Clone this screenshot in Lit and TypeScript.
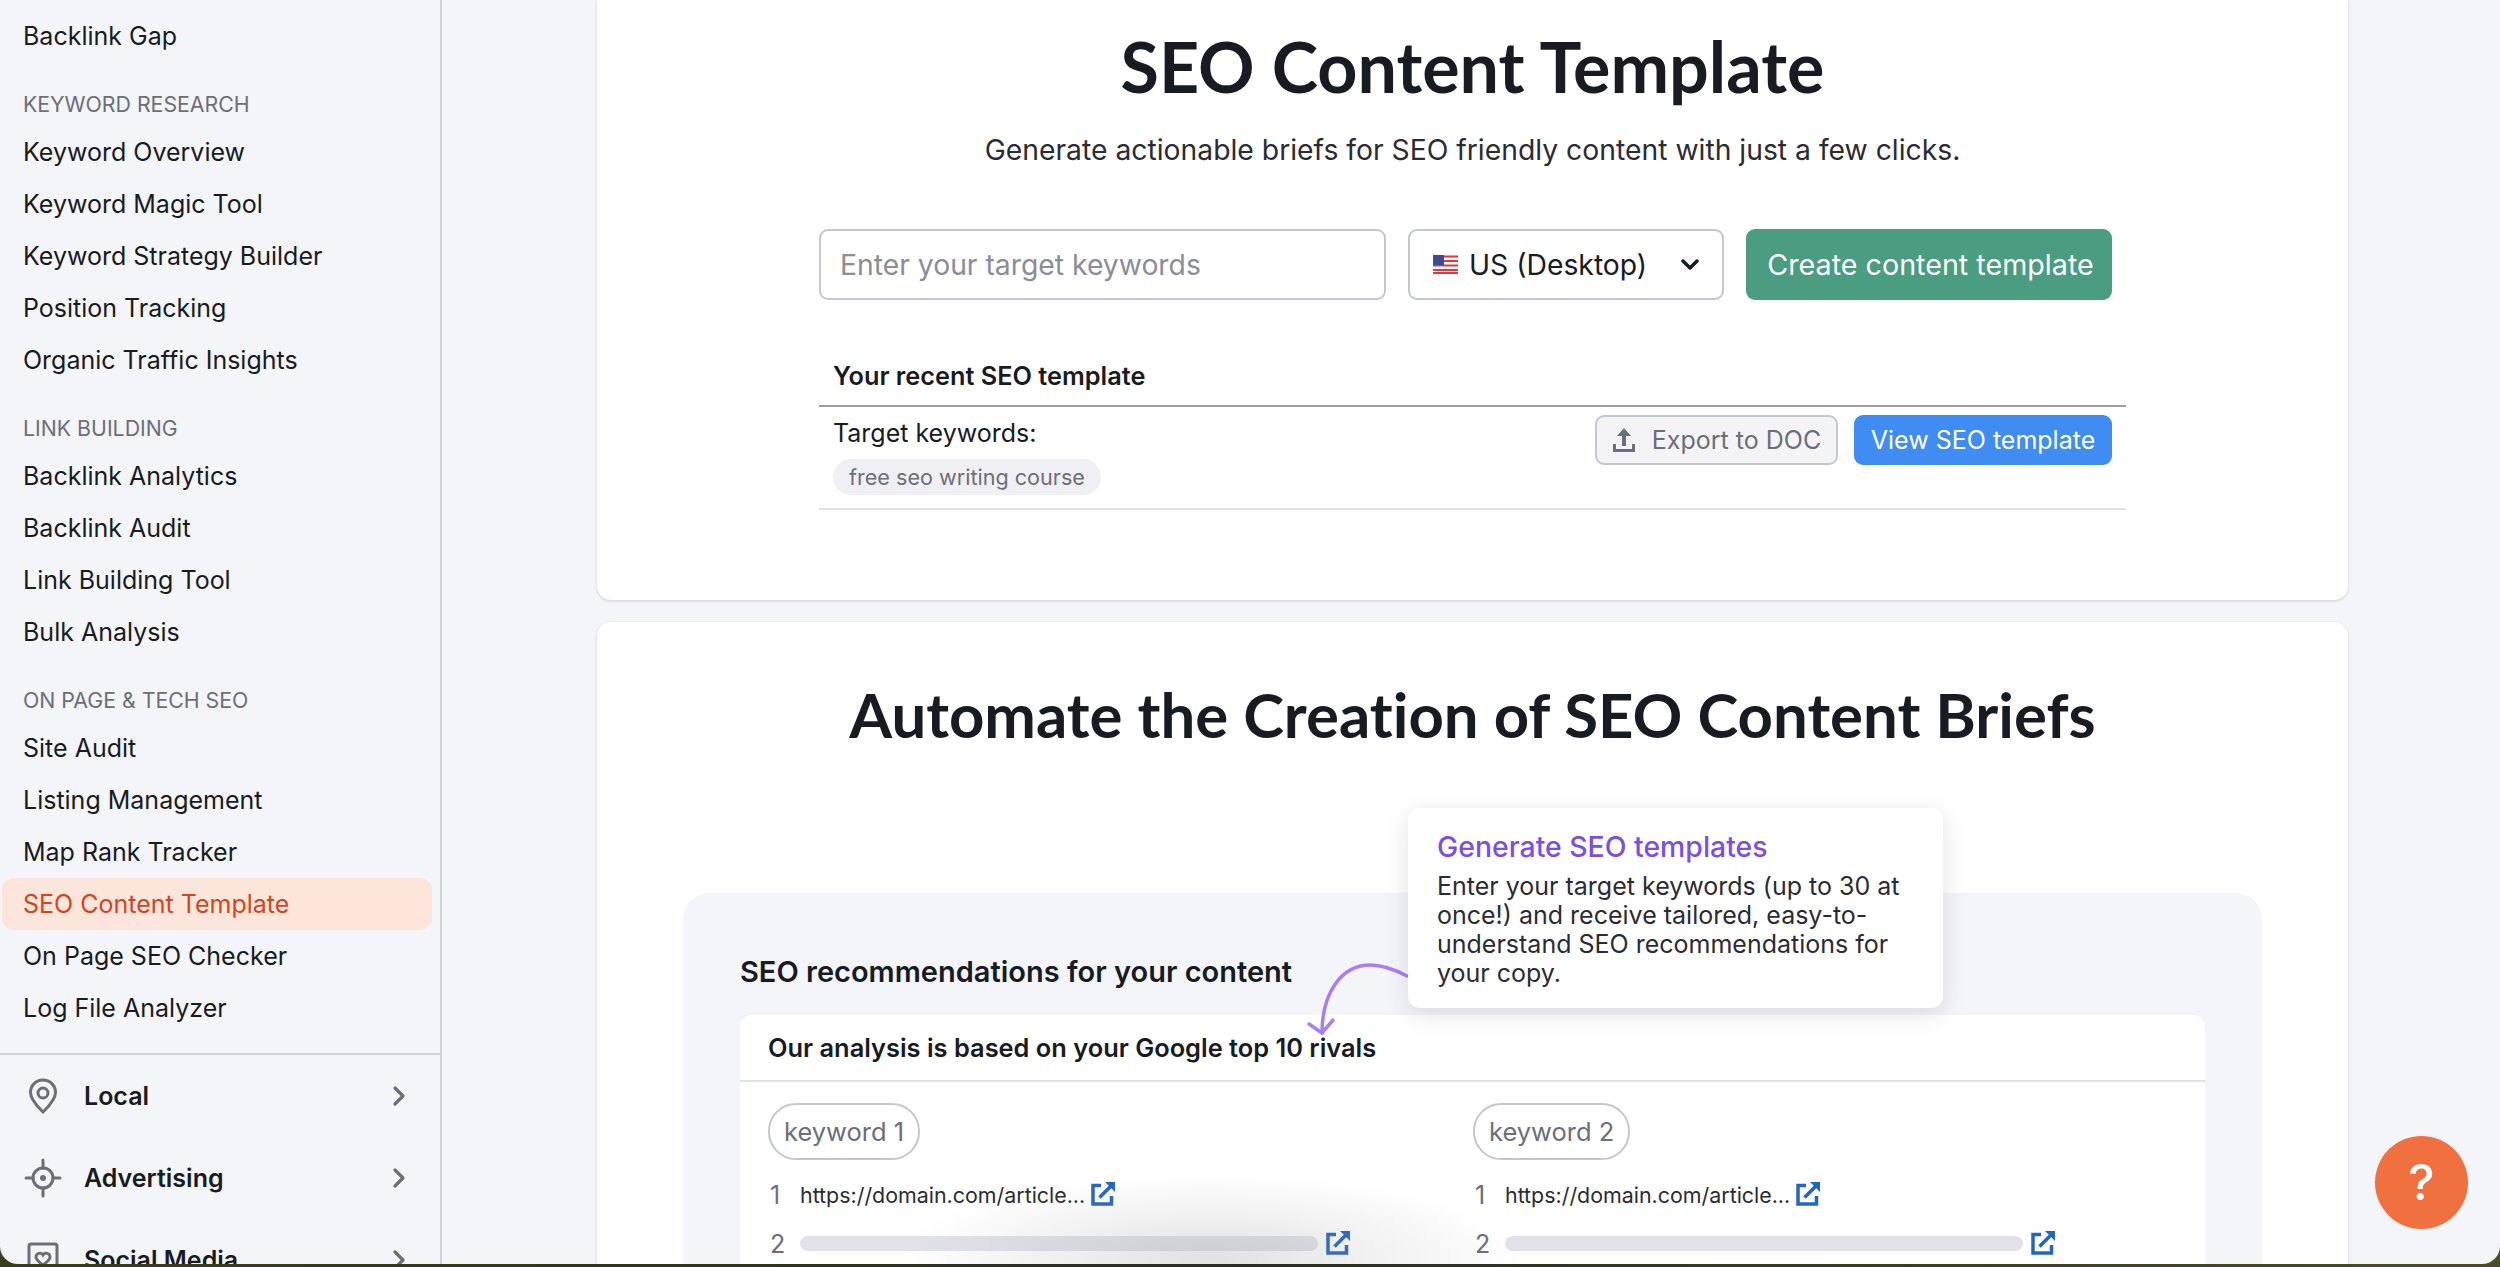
import { LitElement, html, css, svg } from 'lit';
import { customElement } from 'lit/decorators.js';
import { classMap } from 'lit/directives/class-map.js';

const NAV = [
  { items: ['Backlink Gap'] },
  {
    label: 'KEYWORD RESEARCH',
    items: ['Keyword Overview', 'Keyword Magic Tool', 'Keyword Strategy Builder', 'Position Tracking', 'Organic Traffic Insights'],
  },
  {
    label: 'LINK BUILDING',
    items: ['Backlink Analytics', 'Backlink Audit', 'Link Building Tool', 'Bulk Analysis'],
  },
  {
    label: 'ON PAGE & TECH SEO',
    items: ['Site Audit', 'Listing Management', 'Map Rank Tracker', 'SEO Content Template', 'On Page SEO Checker', 'Log File Analyzer'],
  },
];

const chevron = html`<svg class="chev" width="14" height="22" viewBox="0 0 14 22" fill="none" stroke="#6c6e79" stroke-width="3.2" stroke-linecap="round" stroke-linejoin="round"><path d="M3 3l8 8-8 8" /></svg>`;

const GROUPS = [
  {
    name: 'Local',
    icon: svg`<path d="M16 2C9 2 3.500 7.500 3.500 14.500 3.500 22 12 30 16 34c4-4 12.500-12 12.500-19.500C28.500 7.500 23 2 16 2z" fill="none" stroke="#6c6e79" stroke-width="3"/><circle cx="16" cy="15" r="5" fill="none" stroke="#6c6e79" stroke-width="3"/>`,
  },
  {
    name: 'Advertising',
    icon: svg`<circle cx="16" cy="18" r="10" fill="none" stroke="#6c6e79" stroke-width="3"/><circle cx="16" cy="18" r="3" fill="#6c6e79"/><path d="M16 0v8M16 28v8M-1 18h7M26 18h7" stroke="#6c6e79" stroke-width="3" stroke-linecap="round"/>`,
  },
  {
    name: 'Social Media',
    icon: svg`<rect x="2" y="2" width="28" height="32" rx="2" fill="none" stroke="#6c6e79" stroke-width="3"/><path d="M16 23c-4-3-7-5-7-8 0-4 5-5 7-2 2-3 7-2 7 2 0 3-3 5-7 8z" fill="none" stroke="#6c6e79" stroke-width="3"/>`,
  },
];

const externalIcon = html`<svg class="ext" width="26" height="26" viewBox="0 0 26 26" fill="none" stroke="#2266c4" stroke-width="3.500"><path d="M10 5.500H2v18.500h18.500V16" /><path d="M8.500 17.500L21 5" /><path d="M14 2h10v10z" fill="#2266c4" stroke="none" /></svg>`;

@customElement('app-root')
export class AppRoot extends LitElement {
  static styles = css`
    :host {
      display: block;
      height: 1267px;
      background: linear-gradient(90deg, #3a3c1f, #2c2c20 50%, #4a4c2c);
      font-family: Inter, 'Liberation Sans', sans-serif;
      color: #191b23;
    }

    .window {
      position: relative;
      display: flex;
      height: 1264px;
      overflow: hidden;
      background: #f4f5f9;
      border-radius: 0 0 18px 18px;
    }

    /* sidebar */
    .sidebar {
      flex: none;
      box-sizing: border-box;
      width: 442px;
      padding-top: 10px;
      border-right: 2px solid #cfd1d8;
    }

    .label {
      box-sizing: border-box;
      height: 44px;
      margin-top: 20px;
      padding-left: 23px;
      font-size: 21.300px;
      line-height: 44px;
      color: #6c6e79;
    }

    .item {
      height: 52px;
      margin: 0 8px 0 2px;
      padding-left: 21px;
      border-radius: 12px;
      font-size: 25px;
      line-height: 52px;
    }

    .item.active {
      background: #fce6db;
      color: #d6431c;
    }

    .groups {
      margin-top: 19px;
      border-top: 2px solid #d4d6dc;
    }

    .group {
      display: flex;
      align-items: center;
      height: 82px;
      padding: 0 34px 0 27px;
      font-size: 25px;
      font-weight: 600;
    }

    .group svg.gi {
      width: 32px;
      height: 36px;
      margin-right: 25px;
      overflow: visible;
    }

    .group span {
      flex: 1;
    }

    /* main column */
    .main {
      flex: none;
      box-sizing: border-box;
      width: 1751px;
      margin-left: 155px;
    }

    .card {
      background: #fff;
      border-radius: 0 0 14px 14px;
      box-shadow: 0 1px 3px rgba(25, 27, 35, 0.18);
    }

    .top {
      box-sizing: border-box;
      height: 600px;
      padding: 0 222px;
    }

    h1 {
      margin: 0;
      padding-top: 28px;
      font-family: Lato, Inter, sans-serif;
      font-size: 70px;
      line-height: 76px;
      font-weight: 700;
      font-variant-ligatures: none;
      text-align: center;
    }

    .sub {
      margin-top: 26px;
      font-size: 28.300px;
      line-height: 40px;
      text-align: center;
      color: #2b2c33;
    }

    .form {
      display: flex;
      gap: 22px;
      margin-top: 59px;
      padding-right: 14px;
    }

    .input,
    .select {
      box-sizing: border-box;
      display: flex;
      align-items: center;
      height: 71px;
      border: 2px solid #c4c7cf;
      border-radius: 9px;
      font-size: 28.300px;
    }

    .input {
      width: 567px;
      padding-left: 19px;
      color: #8b8d98;
    }

    .select {
      width: 316px;
      padding: 0 23px;
      gap: 11px;
    }

    .select .name {
      flex: 1;
    }

    .create {
      flex: 1;
      height: 71px;
      padding-left: 3px;
      border-radius: 9px;
      background: #4a9d80;
      color: #fff;
      font-size: 28.700px;
      line-height: 71px;
      text-align: center;
    }

    .recent {
      margin-top: 61px;
      padding: 0 14px 14px;
      border-bottom: 2px solid #9a9da8;
      font-size: 25.300px;
      line-height: 30px;
      font-weight: 600;
    }

    .row {
      box-sizing: border-box;
      display: flex;
      justify-content: space-between;
      height: 103px;
      padding: 8px 14px 0;
      border-bottom: 2px solid #e0e1e9;
    }

    .kw {
      font-size: 25px;
      line-height: 36px;
    }

    .chip {
      display: inline-block;
      margin-top: 8px;
      padding: 0 16px;
      border-radius: 18px;
      background: #f0f0f4;
      color: #6c6e79;
      font-size: 21.600px;
      line-height: 36px;
    }

    .actions {
      display: flex;
      gap: 16px;
    }

    .btn {
      box-sizing: border-box;
      display: flex;
      align-items: center;
      justify-content: center;
      height: 50px;
      border-radius: 9px;
      font-size: 25px;
    }

    .export {
      width: 243px;
      gap: 16px;
      border: 2px solid #c4c7cf;
      background: #f4f4f6;
      color: #6c6e79;
    }

    .view {
      width: 258px;
      background: #3f8df2;
      color: #fff;
    }

    /* second card */
    .auto {
      margin-top: 22px;
      height: 700px;
      padding: 0 86px;
      border-radius: 14px 14px 0 0;
    }

    h2 {
      margin: 0;
      padding-top: 56px;
      font-family: Lato, Inter, sans-serif;
      font-size: 61.700px;
      line-height: 72px;
      font-weight: 700;
      font-variant-ligatures: none;
      text-align: center;
    }

    .panel {
      position: relative;
      height: 400px;
      margin-top: 143px;
      padding: 60px 57px;
      background: #f4f5f9;
      border-radius: 26px;
    }

    .panel h3 {
      margin: 0 0 24px;
      font-size: 29px;
      line-height: 38px;
      font-weight: 600;
    }

    .inner {
      background: #fff;
      border-radius: 12px;
    }

    .inner-head {
      padding: 0 28px;
      height: 65px;
      border-bottom: 2px solid #e0e1e9;
      font-size: 25.400px;
      font-weight: 600;
      line-height: 65px;
    }

    .cols {
      display: grid;
      grid-template-columns: 705px 1fr;
      padding: 21px 28px;
    }

    .pill {
      box-sizing: border-box;
      display: inline-block;
      height: 57px;
      padding: 0 14px;
      border: 2px solid #c4c7cf;
      border-radius: 28px;
      color: #6c6e79;
      font-size: 25.500px;
      line-height: 53px;
    }

    .rank {
      display: flex;
      align-items: center;
      height: 49px;
      color: #6c6e79;
      font-size: 25px;
    }

    .rank:first-of-type {
      margin-top: 10px;
    }

    .rank b {
      box-sizing: border-box;
      width: 32px;
      padding-left: 2px;
      font-weight: 400;
    }

    .url {
      margin-right: 6px;
      font-size: 21.400px;
      color: #2b2c33;
    }

    .bar {
      width: 518px;
      height: 15px;
      margin-right: 8px;
      border-radius: 8px;
      background: #e2e3e9;
    }

    .ext {
      margin-bottom: 4px;
    }

    .tip {
      position: absolute;
      left: 725px;
      top: -85px;
      box-sizing: border-box;
      width: 535px;
      height: 200px;
      padding: 22px 29px;
      background: #fff;
      border-radius: 12px;
      box-shadow: 0 6px 24px rgba(25, 27, 35, 0.12);
      font-size: 25px;
      line-height: 29px;
      color: #2b2c33;
    }

    .tip strong {
      display: block;
      margin-bottom: 8px;
      font-size: 28.400px;
      line-height: 34px;
      font-weight: 500;
      color: #7c4fe0;
    }

    .curve {
      position: absolute;
      left: 622px;
      top: 67px;
    }

    .fade {
      position: absolute;
      left: 900px;
      bottom: -80px;
      width: 620px;
      height: 170px;
      background: radial-gradient(closest-side, rgba(150, 150, 150, 0.28), rgba(150, 150, 150, 0));
      pointer-events: none;
    }

    .help {
      position: absolute;
      left: 2375px;
      top: 1136px;
      width: 93px;
      height: 93px;
      border-radius: 50%;
      background: #f0703f;
      color: #fff;
      font-size: 50px;
      font-weight: 500;
      line-height: 93px;
      text-align: center;
    }
  `;

  private renderNav() {
    return NAV.map(
      (section) => html`
        ${section.label ? html`<div class="label">${section.label}</div>` : ''}
        ${section.items.map(
          (name) => html`<div class=${classMap({ item: true, active: name === 'SEO Content Template' })}>${name}</div>`
        )}
      `
    );
  }

  private renderKeyword(name: string) {
    return html`
      <div>
        <span class="pill">${name}</span>
        <div class="rank"><b>1</b><span class="url">https://domain.com/article...</span>${externalIcon}</div>
        <div class="rank"><b>2</b><span class="bar"></span>${externalIcon}</div>
      </div>
    `;
  }

  render() {
    return html`
      <div class="window">
        <aside class="sidebar">
          ${this.renderNav()}
          <div class="groups">
            ${GROUPS.map(
              (g) => html`<div class="group"><svg class="gi" viewBox="0 0 32 36">${g.icon}</svg><span>${g.name}</span>${chevron}</div>`
            )}
          </div>
        </aside>
        <main class="main">
          <section class="card top">
            <h1>SEO Content Template</h1>
            <div class="sub">Generate actionable briefs for SEO friendly content with just a few clicks.</div>
            <div class="form">
              <div class="input">Enter your target keywords</div>
              <div class="select">
                <svg width="25" height="19" viewBox="0 0 25 19">
                  <rect width="25" height="19" fill="#fff" />
                  <path d="M0 1.500h25M0 6h25M0 10.500h25M0 15h25M0 18h25" stroke="#e8343c" stroke-width="2" />
                  <rect width="11" height="10" fill="#3c4a94" />
                </svg>
                <span class="name">US (Desktop)</span>
                <svg width="18" height="12" viewBox="0 0 18 12" fill="none" stroke="#191b23" stroke-width="3.500" stroke-linecap="round" stroke-linejoin="round"><path d="M2 2l7 7 7-7" /></svg>
              </div>
              <div class="create">Create content template</div>
            </div>
            <div class="recent">Your recent SEO template</div>
            <div class="row">
              <div>
                <div class="kw">Target keywords:</div>
                <span class="chip">free seo writing course</span>
              </div>
              <div class="actions">
                <div class="btn export">
                  <svg width="24" height="26" viewBox="0 0 24 26" fill="#6c6e79"><path d="M12 1l7 8h-5v10h-4V9H5z" /><path d="M1 17h3v5h16v-5h3v8H1z" /></svg>
                  Export to DOC
                </div>
                <div class="btn view">View SEO template</div>
              </div>
            </div>
          </section>
          <section class="card auto">
            <h2>Automate the Creation of SEO Content Briefs</h2>
            <div class="panel">
              <h3>SEO recommendations for your content</h3>
              <div class="inner">
                <div class="inner-head">Our analysis is based on your Google top 10 rivals</div>
                <div class="cols">${this.renderKeyword('keyword 1')}${this.renderKeyword('keyword 2')}</div>
              </div>
              <svg class="curve" width="105" height="78" viewBox="0 0 105 78" fill="none" stroke="#a97ef5" stroke-width="3.500" stroke-linecap="round" stroke-linejoin="round">
                <path d="M102 16C87 8 77 5 65 5 35 5 17 35 17 73" />
                <path d="M4 64l13 9 11-13" />
              </svg>
              <div class="tip">
                <strong>Generate SEO templates</strong>
                Enter your target keywords (up to 30 at once!) and receive tailored, easy-to-understand SEO recommendations for your copy.
              </div>
            </div>
          </section>
        </main>
        <div class="fade"></div>
        <div class="help">?</div>
      </div>
    `;
  }
}
